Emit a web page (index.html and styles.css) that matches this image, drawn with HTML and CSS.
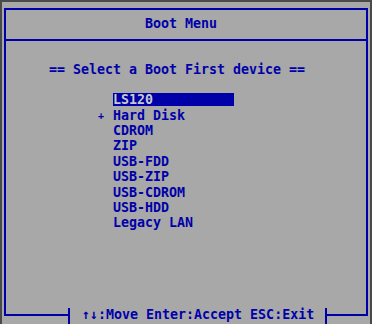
FILE: index.html
```html
<!DOCTYPE html>
<html lang="en">
<head>
    <meta charset="UTF-8">
    <title>Boot Menu</title>
    <link rel="stylesheet" href="styles.css">
</head>
<body>
    <div class="frame">
        <div class="frame-title">Boot Menu</div>
        <div class="section-title">== Select a Boot First device ==</div>
        <ul class="device-list">
            <li><span class="mark"></span><span class="label selected">LS120</span></li>
            <li><span class="mark">+</span><span class="label">Hard Disk</span></li>
            <li><span class="mark"></span><span class="label">CDROM</span></li>
            <li><span class="mark"></span><span class="label">ZIP</span></li>
            <li><span class="mark"></span><span class="label">USB-FDD</span></li>
            <li><span class="mark"></span><span class="label">USB-ZIP</span></li>
            <li><span class="mark"></span><span class="label">USB-CDROM</span></li>
            <li><span class="mark"></span><span class="label">USB-HDD</span></li>
            <li><span class="mark"></span><span class="label">Legacy LAN</span></li>
        </ul>
    </div>
    <div class="footer">
        <div class="seg seg-left"></div>
        <div class="bar"></div>
        <div class="keys">↑↓:Move Enter:Accept ESC:Exit</div>
        <div class="bar"></div>
        <div class="seg seg-right"></div>
    </div>
</body>
</html>
```

FILE: styles.css
```css
* {
    margin: 0;
    padding: 0;
    list-style: none;
    box-sizing: border-box;
}
html {
    background: #a8a8a8;
}
body {
    width: 372px;
    height: 324px;
    overflow: hidden;
    display: flex;
    flex-direction: column;
    background: #a8a8a8;
    border: 2px solid #4a4a4a;
    border-bottom: none;
    color: #0000a8;
    font-family: "DejaVu Sans Mono", "Liberation Mono", monospace;
    font-weight: bold;
    font-size: 13.3px;
}
.frame {
    height: 292px;
    margin: 6px 2px 0 2px;
    border: 2px solid #0000a8;
    border-bottom: none;
}
.frame-title {
    height: 31px;
    line-height: 27px;
    padding-right: 10px;
    text-align: center;
    border-bottom: 2px solid #0000a8;
}
.section-title {
    margin-top: 21px;
    line-height: 16px;
    padding-right: 18px;
    text-align: center;
    white-space: pre;
}
.device-list {
    margin-top: 14px;
    padding-left: 91px;
}
.device-list li {
    height: 15.4px;
    display: flex;
    align-items: center;
    white-space: pre;
}
.mark {
    width: 16px;
    padding-left: 1px;
    font-size: 10px;
    line-height: 13px;
}
.label {
    width: 121px;
    line-height: 13px;
}
.selected {
    background: #0000a8;
    color: #c8c8c8;
}
.footer {
    height: 24px;
    margin: 0 2px;
    display: flex;
    align-items: flex-end;
}
.seg {
    height: 16px;
    margin-bottom: 8px;
    border-bottom: 2px solid #0000a8;
}
.seg-left {
    width: 64px;
    border-left: 2px solid #0000a8;
}
.seg-right {
    flex: 1;
    border-right: 2px solid #0000a8;
}
.bar {
    width: 2px;
    height: 16px;
    background: #0000a8;
}
.keys {
    margin: 0 11px 0 12px;
    line-height: 18px;
    white-space: pre;
}
```
